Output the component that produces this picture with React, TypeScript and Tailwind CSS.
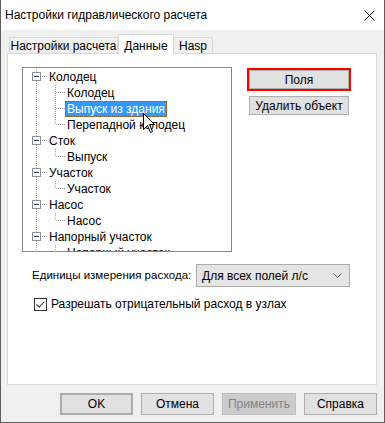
import React from "react";

type Row = { label: string; level: 0 | 1; last?: boolean; selected?: boolean };

const rows: Row[] = [
  { label: "Колодец", level: 0 },
  { label: "Колодец", level: 1 },
  { label: "Выпуск из здания", level: 1, selected: true },
  { label: "Перепадной колодец", level: 1, last: true },
  { label: "Сток", level: 0 },
  { label: "Выпуск", level: 1, last: true },
  { label: "Участок", level: 0 },
  { label: "Участок", level: 1, last: true },
  { label: "Насос", level: 0 },
  { label: "Насос", level: 1, last: true },
  { label: "Напорный участок", level: 0 },
  { label: "Напорный участок", level: 1, last: true },
];

const dot = { stroke: "#a0a0a0", strokeDasharray: "1 1", shapeRendering: "crispEdges" as const };

// connector lines + expand box for one tree row
const Connector = ({ row }: { row: Row }) => {
  if (row.level === 0) {
    return (
      <svg width="24" height="16" className="shrink-0">
        <line x1="13.5" y1="0" x2="13.5" y2="16" {...dot} />
        <rect x="9.5" y="3.5" width="8" height="8" fill="#fff" stroke="#919191" shapeRendering="crispEdges" />
        <line x1="11" y1="7.5" x2="16" y2="7.5" stroke="#1e3287" shapeRendering="crispEdges" />
        <line x1="19" y1="7.5" x2="24" y2="7.5" {...dot} />
      </svg>
    );
  }
  return (
    <svg width="42" height="16" className="shrink-0">
      <line x1="13.5" y1="0" x2="13.5" y2="16" {...dot} />
      <line x1="32.5" y1="0" x2="32.5" y2={row.last ? 8 : 16} {...dot} />
      <line x1="33" y1="7.5" x2="42" y2="7.5" {...dot} />
    </svg>
  );
};

const WinButton = ({ children, className = "" }: { children: React.ReactNode; className?: string }) => (
  <div
    className={`flex items-center justify-center bg-[#e1e1e1] border border-[#adadad] text-[12px] text-black ${className}`}
  >
    {children}
  </div>
);

export default function App() {
  return (
    <div
      className="relative w-[385px] h-[423px] flex flex-col border-x border-b border-[#5f5f5f] bg-[#f0f0f0] overflow-hidden select-none"
      style={{ fontFamily: "'Liberation Sans', Arial, sans-serif" }}
    >
      {/* title bar */}
      <div className="h-[30px] shrink-0 bg-white flex items-center justify-between pl-[4px] pr-[9px]">
        <span className="text-[12px] text-black">Настройки гидравлического расчета</span>
        <svg width="11" height="11" viewBox="0 0 11 11">
          <path d="M0.5 0.5 L10.5 10.5 M10.5 0.5 L0.5 10.5" stroke="#000" strokeWidth="1" />
        </svg>
      </div>

      {/* tabs */}
      <div className="flex items-end pl-[8px] pt-[3px] h-[23px] relative z-10">
        <div className="w-[109px] h-[16px] border border-b-0 border-[#d9d9d9] flex items-center justify-center text-[12px] text-black">
          Настройки расчета
        </div>
        <div className="w-[56px] h-[20px] border border-b-0 border-[#d9d9d9] bg-white flex items-start justify-center pt-[2px] text-[12px] text-black -mb-px">
          Данные
        </div>
        <div className="w-[39px] h-[16px] border border-l-0 border-b-0 border-[#d9d9d9] flex items-center justify-center text-[12px] text-black">
          Hasp
        </div>
      </div>

      {/* tab panel */}
      <div className="ml-[6px] mr-[7px] h-[332px] border border-[#d9d9d9] bg-white pt-[13px] pl-[14px] flex flex-col">
        <div className="flex">
          {/* tree */}
          <div className="w-[210px] h-[185px] border border-[#828790] bg-white overflow-hidden pt-[1px] text-[12px] text-black">
            {rows.map((row, i) => (
              <div key={i} className="h-[16px] flex items-center">
                <Connector row={row} />
                <span
                  className={`h-[16px] leading-[14px] px-[1px] whitespace-nowrap border ${
                    row.selected
                      ? "bg-[#3399ff] text-white border-dotted border-[#8a5a20]"
                      : "border-transparent"
                  }`}
                >
                  {row.label}
                </span>
              </div>
            ))}
          </div>

          {/* side buttons */}
          <div className="ml-[17px] pt-[3px] flex flex-col gap-[7px]">
            <WinButton className="w-[100px] h-[19px] outline-2 outline-[#ff0000]">Поля</WinButton>
            <WinButton className="w-[100px] h-[19px]">Удалить объект</WinButton>
          </div>
        </div>

        {/* units */}
        <div className="flex items-center mt-[12px] pl-[10px]">
          <span className="w-[164px] shrink-0 whitespace-nowrap text-[11.5px] text-black">Единицы измерения расхода:</span>
          <div className="w-[154px] h-[23px] border border-[#acacac] bg-[#e5e5e5] flex items-center justify-between pl-[5px] pr-[7px] text-[12px] text-black">
            <span className="whitespace-nowrap">Для всех полей л/с</span>
            <svg width="9" height="5" viewBox="0 0 9 5">
              <path d="M0.5 0.5 L4.5 4.5 L8.5 0.5" fill="none" stroke="#606060" />
            </svg>
          </div>
        </div>

        {/* checkbox */}
        <div className="flex items-center mt-[8px] pl-[12px] gap-[4px]">
          <div className="w-[13px] h-[13px] border border-[#333] bg-white flex items-center justify-center">
            <svg width="11" height="11" viewBox="0 0 11 11">
              <path d="M1.5 5.5 L4.2 8.2 L9.5 2.5" fill="none" stroke="#333" strokeWidth="1.1" />
            </svg>
          </div>
          <span className="text-[12px] text-black whitespace-nowrap">Разрешать отрицательный расход в узлах</span>
        </div>
      </div>

      {/* dialog buttons */}
      <div className="flex justify-end gap-[8px] pr-[7px] pt-[8px]">
        <WinButton className="w-[73px] h-[22px] border-2 border-[#0078d7]">OK</WinButton>
        <WinButton className="w-[73px] h-[22px]">Отмена</WinButton>
        <div className="w-[74px] h-[22px] flex items-center justify-center bg-[#cccccc] border border-[#bfbfbf] text-[12px] text-[#838383]">
          Применить
        </div>
        <WinButton className="w-[73px] h-[22px]">Справка</WinButton>
      </div>

      {/* mouse pointer */}
      <svg width="13" height="21" viewBox="0 0 13 21" className="absolute left-[142px] top-[113px] z-20">
        <path
          d="M0.5 0.5 L0.5 16.5 L4.5 12.5 L7.5 19.5 L9.5 18.5 L6.5 11.5 L11.5 11.5 Z"
          fill="#fff"
          stroke="#000"
          strokeLinejoin="miter"
        />
      </svg>
    </div>
  );
}
